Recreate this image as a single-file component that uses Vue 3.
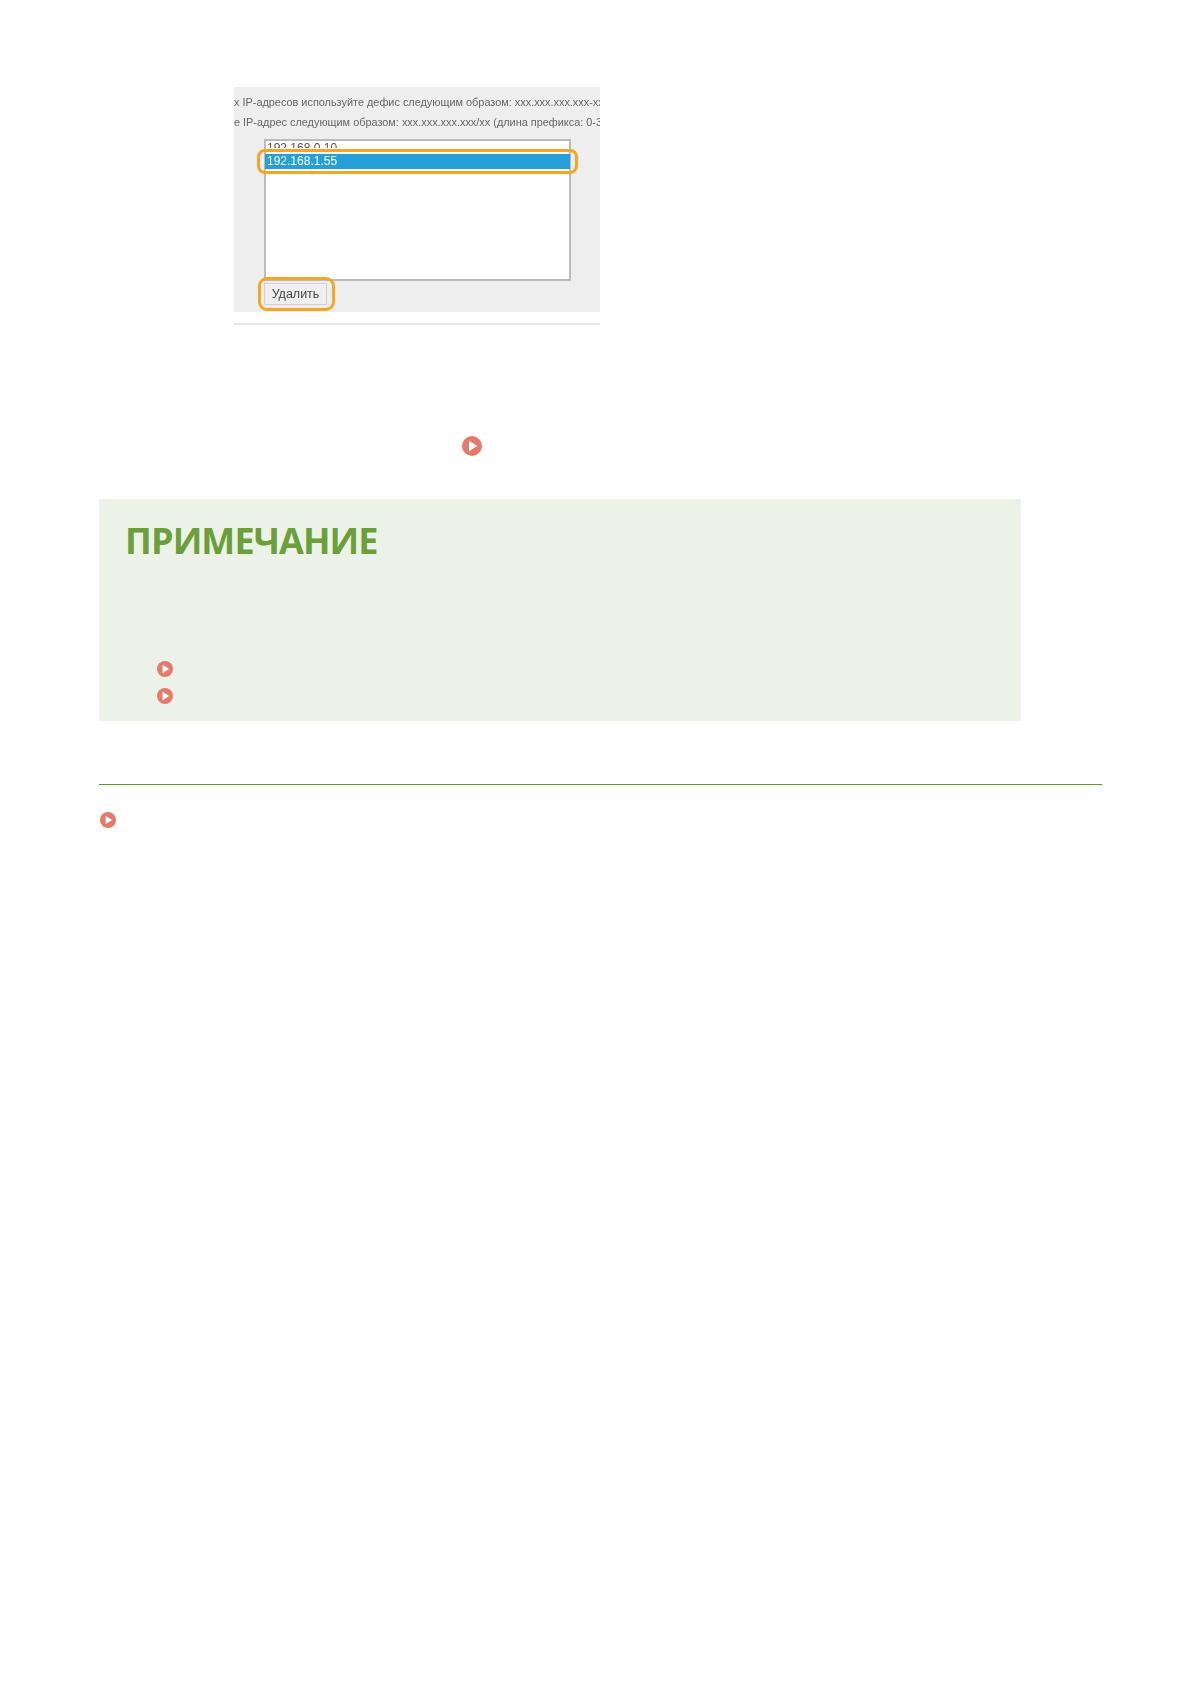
<script setup>
const links = [1, 2]
</script>

<template>
  <div class="page">
    <div class="shot">
      <div class="panel">
        <p class="hint">х IP-адресов используйте дефис следующим образом: xxx.xxx.xxx.xxx-xxx</p>
        <p class="hint">е IP-адрес следующим образом: xxx.xxx.xxx.xxx/xx (длина префикса: 0-32)</p>
        <div class="listbox">
          <div class="row row-cut">192.168.0.10</div>
          <div class="row row-active">192.168.1.55</div>
        </div>
        <button class="del" type="button">Удалить</button>
        <span class="mark mark-row"></span>
        <span class="mark mark-btn"></span>
      </div>
      <div class="shot-line"></div>
    </div>

    <div class="step-link">
      <svg class="arrow arrow-lg" viewBox="0 0 20 20">
        <circle cx="10" cy="10" r="10" fill="#e37b6d" />
        <path d="M7 4.8 L15.2 10 L7 15.2 Z" fill="#fff" />
      </svg>
    </div>

    <div class="note">
      <h2 class="note-title">ПРИМЕЧАНИЕ</h2>
      <ul class="note-links">
        <li v-for="n in links" :key="n">
          <svg class="arrow" viewBox="0 0 20 20">
            <circle cx="10" cy="10" r="10" fill="#e37b6d" />
            <path d="M7 4.8 L15.2 10 L7 15.2 Z" fill="#fff" />
          </svg>
        </li>
      </ul>
    </div>

    <div class="related">
      <svg class="arrow" viewBox="0 0 20 20">
        <circle cx="10" cy="10" r="10" fill="#e37b6d" />
        <path d="M7 4.8 L15.2 10 L7 15.2 Z" fill="#fff" />
      </svg>
    </div>
  </div>
</template>

<style scoped>
.page {
  box-sizing: border-box;
  width: 1191px;
  height: 1684px;
  padding: 87px 89px 0 99px;
  font-family: "Liberation Sans", Arial, sans-serif;
  overflow: hidden;
}

.shot {
  width: 366px;
  margin-left: 135px;
  filter: blur(0.7px);
}

.panel {
  position: relative;
  box-sizing: border-box;
  height: 225px;
  padding-top: 8px;
  background: #eeeeee;
  overflow: hidden;
}

.hint {
  margin: 0 0 6px;
  height: 14px;
  font-size: 10.9px;
  line-height: 14px;
  color: #666;
  white-space: nowrap;
  overflow: hidden;
  filter: blur(0.4px);
}

.hint + .hint {
  margin-top: 6px;
  margin-bottom: 0;
}

.listbox {
  box-sizing: border-box;
  width: 307px;
  height: 142px;
  margin: 10px 0 0 30px;
  border: 2px solid #bbbbbb;
  background: #fff;
}

.row {
  padding-left: 1px;
  font-size: 12px;
  line-height: 14px;
  color: #555;
}

.row-cut {
  height: 7px;
  overflow: hidden;
  filter: blur(0.4px);
}

.row-active {
  height: 15px;
  margin: 6px -1px 0;
  padding-left: 2px;
  background: #269fd9;
  color: #fff;
}

.del {
  display: block;
  box-sizing: border-box;
  width: 63px;
  height: 22px;
  margin: 2px 0 0 30px;
  padding: 0 0 1px;
  border: 1px solid #d0d0d0;
  background: #efefef;
  font: 12.5px "Liberation Sans", Arial, sans-serif;
  color: #444;
}

.mark {
  position: absolute;
  box-sizing: border-box;
  border: 3px solid #f6a623;
}

.mark-row {
  left: 23px;
  top: 62px;
  width: 321px;
  height: 25px;
  border-radius: 8px;
}

.mark-btn {
  left: 24px;
  top: 190px;
  width: 77px;
  height: 34px;
  border-radius: 9px;
}

.shot-line {
  height: 2px;
  margin-top: 11px;
  background: #e8e8e8;
}

.step-link {
  display: flex;
  height: 20px;
  margin: 111px 0 0 363px;
}

.arrow {
  display: block;
  width: 16px;
  height: 16px;
}

.arrow-lg {
  width: 20px;
  height: 20px;
}

.note {
  box-sizing: border-box;
  width: 922px;
  height: 222px;
  margin-top: 43px;
  padding: 18px 26px 0;
  background: #edf2e9;
}

.note-title {
  margin: 0;
  font-family: "Open Sans", sans-serif;
  font-size: 36px;
  font-weight: 700;
  letter-spacing: -0.9px;
  line-height: 48px;
  color: #6a9f39;
}

.note-links {
  display: flex;
  flex-direction: column;
  gap: 11px;
  margin: 96px 0 0;
  padding: 0 0 0 32px;
  list-style: none;
}

.related {
  width: 1003px;
  margin-top: 63px;
  padding-top: 27px;
  border-top: 1px solid #5a9a2c;
}

.related .arrow {
  margin-left: 1px;
}
</style>
